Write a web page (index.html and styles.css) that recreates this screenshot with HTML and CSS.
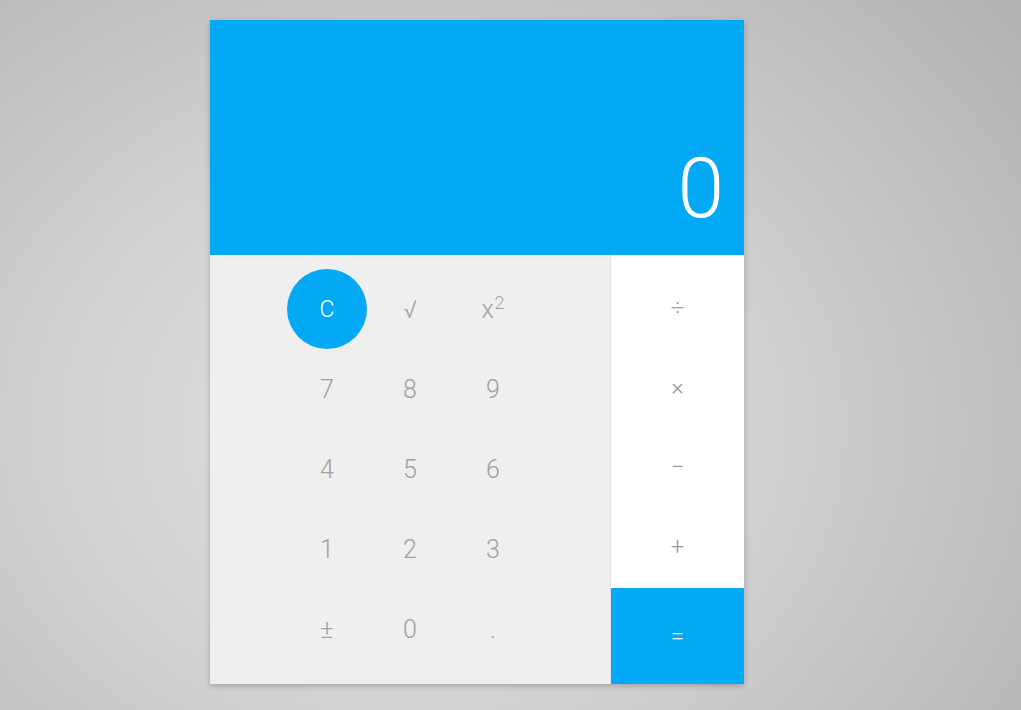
FILE: index.html
```html
<!DOCTYPE html>
<html>
<head>
<meta charset="utf-8">
<link rel="stylesheet" href="styles.css">
</head>
<body>
<div class="calc">
  <div class="display"><span class="value">0</span></div>
  <div class="pad">
    <div class="keys">
      <button class="key clear">C</button>
      <button class="key">√</button>
      <button class="key">x<sup>2</sup></button>
      <button class="key">7</button>
      <button class="key">8</button>
      <button class="key">9</button>
      <button class="key">4</button>
      <button class="key">5</button>
      <button class="key">6</button>
      <button class="key">1</button>
      <button class="key">2</button>
      <button class="key">3</button>
      <button class="key">±</button>
      <button class="key">0</button>
      <button class="key">.</button>
    </div>
    <div class="ops">
      <button class="op">÷</button>
      <button class="op">×</button>
      <button class="op">−</button>
      <button class="op">+</button>
      <button class="op equals">=</button>
    </div>
  </div>
</div>
</body>
</html>
```
FILE: styles.css
```css
html, body {
  margin: 0;
  height: 100%;
}
body {
  background: radial-gradient(ellipse 75% 90% at 40% 60%, #e4e4e4 0%, #d2d2d2 45%, #b4b4b4 100%);
  font-family: Roboto, "Noto Sans", sans-serif;
  padding-top: 20px;
  box-sizing: border-box;
}
.calc {
  width: 534px;
  margin-left: 210px;
  box-shadow: 0 2px 6px rgba(0,0,0,0.22);
}
.display {
  height: 235px;
  background: #03a9f4;
  display: flex;
  align-items: flex-end;
  justify-content: flex-end;
  padding: 0 20px 24px 0;
  box-sizing: border-box;
}
.value {
  color: #fff;
  font-weight: 300;
  font-size: 84px;
  line-height: 84px;
}
.pad {
  display: flex;
  height: 429px;
}
.keys {
  width: 401px;
  background: #efefef;
  border-right: 1px solid #e2e2e2;
  display: grid;
  grid-template-columns: repeat(3, 80px);
  grid-auto-rows: 80px;
  column-gap: 3px;
  justify-content: center;
  align-content: start;
  padding-top: 14px;
  box-sizing: border-box;
}
button {
  border: none;
  background: none;
  font-family: inherit;
  padding: 0;
  margin: 0;
  cursor: pointer;
}
.key {
  font-size: 25px;
  font-weight: 300;
  color: #a0a0a0;
  display: flex;
  align-items: center;
  justify-content: center;
}
.key sup {
  font-size: 18px;
  position: relative;
  top: -7px;
  margin-left: 1px;
  vertical-align: super;
}
.key.clear {
  background: #03a9f4;
  color: #fff;
  border-radius: 50%;
  font-size: 23px;
}
.ops {
  flex: 1;
  background: #fff;
  display: flex;
  flex-direction: column;
  padding-top: 11px;
}
.op {
  height: 80px;
  font-size: 24px;
  font-weight: 300;
  color: #9a9a9a;
  display: flex;
  align-items: center;
  justify-content: center;
  padding-top: 2px;
}
.op.equals {
  margin-top: 2px;
  height: 96px;
  background: #03a9f4;
  color: #fff;
  padding-top: 0;
}
```
